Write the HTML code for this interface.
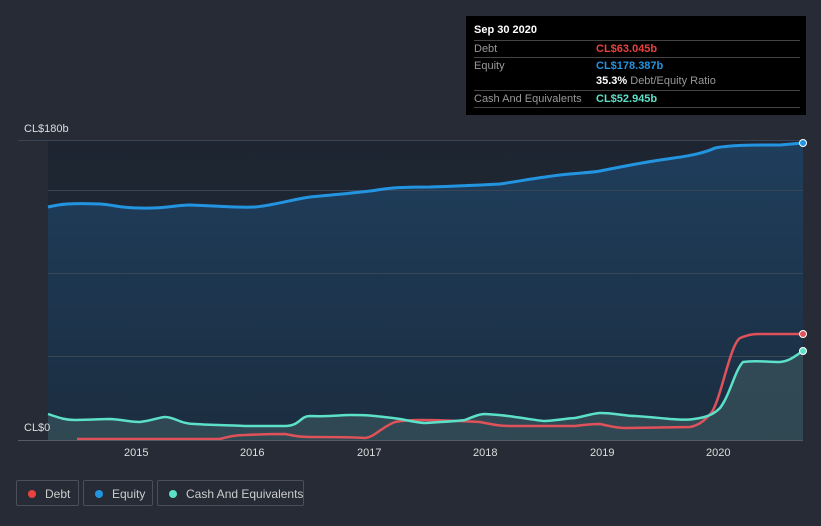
<!DOCTYPE html>
<html><head><style>
body{margin:0;width:821px;height:526px;background:#262b36;font-family:"Liberation Sans",sans-serif;overflow:hidden;position:relative}
.tt{position:absolute;left:466px;top:16px;width:340px;height:99px;background:#000;font-size:11px}
.tt .h{position:absolute;left:8px;top:8px;color:#fff;font-weight:bold}
.row{position:absolute;left:8px;width:326px;border-top:1px solid #444;height:16px;line-height:16px;color:#999}
.row span{position:absolute;left:122px;font-weight:bold}
.leg{position:absolute;top:480px;height:26px;border:1px solid #4a4f5a;border-radius:2px;color:#ccc;font-size:12px;line-height:26px;box-sizing:border-box;white-space:nowrap}
.leg i{position:absolute;left:11px;top:9px;width:8px;height:8px;border-radius:50%}
.ax{position:absolute;color:#ddd;font-size:11px}
</style></head><body>
<svg width="821" height="526" style="position:absolute;left:0;top:0">
<defs>
<linearGradient id="eq" x1="0" y1="0" x2="0" y2="1"><stop offset="0" stop-color="#1f3e5c"/><stop offset="1" stop-color="#1b2d40"/></linearGradient>
<linearGradient id="bg" x1="0" y1="0" x2="0" y2="1"><stop offset="0" stop-color="#1e2531"/><stop offset="1" stop-color="#1d2c3c"/></linearGradient>
</defs>
<rect x="48" y="140" width="755" height="300" fill="url(#bg)"/>
<path d="M48,207 C60,204 70,203 100,204 C115,205 120,208 140,208 C165,209 175,205 190,205 C220,206 240,208 255,207 C270,206 290,200 310,197 C330,195 345,194 370,191 C385,189 390,187 430,187 C460,186 480,185 500,184 C520,181 530,179 545,177 C570,173 590,173 600,171 C620,167 640,163 660,160 C680,157 700,155 715,148 C730,145 750,145 780,145 L803,143 L803,440 L48,440Z" fill="url(#eq)"/>
<g stroke="#3a4556" stroke-width="1"><line x1="18" y1="140.5" x2="803" y2="140.5"/><line x1="48" y1="190.5" x2="803" y2="190.5"/><line x1="48" y1="273.5" x2="803" y2="273.5"/><line x1="48" y1="356.5" x2="803" y2="356.5"/></g>
<path d="M48,414 C60,418 65,420 75,420 C90,420 100,419 110,419 C125,420 130,422 140,422 C155,420 160,417 165,417 C175,417 180,424 195,424 C210,425 220,425 245,426 L285,426 C300,426 300,416 310,416 C330,417 340,415 350,415 C365,415 370,415 400,419 C410,421 420,423 425,423 C440,422 460,421 465,420 C475,416 480,414 485,414 C500,415 510,416 515,417 C530,419 540,421 545,421 C560,420 570,418 575,418 C590,415 595,413 600,413 C615,413 625,416 635,416 C650,417 660,418 670,419 C685,420 690,420 700,418 C710,416 715,413 720,408 C730,395 735,370 743,362 C755,360 765,362 780,362 C790,361 795,356 803,351 L803,440 L48,440Z" fill="#3e5a5f" fill-opacity="0.6"/>
<path d="M48,207 C60,204 70,203 100,204 C115,205 120,208 140,208 C165,209 175,205 190,205 C220,206 240,208 255,207 C270,206 290,200 310,197 C330,195 345,194 370,191 C385,189 390,187 430,187 C460,186 480,185 500,184 C520,181 530,179 545,177 C570,173 590,173 600,171 C620,167 640,163 660,160 C680,157 700,155 715,148 C730,145 750,145 780,145 L803,143" fill="none" stroke="#2394e0" stroke-width="3"/>
<path d="M77,439 L220,439 C230,436 240,435 245,435 C265,434 275,434 285,434 C295,436 300,437 310,437 C330,437 350,437 365,438 C375,437 380,428 395,422 C405,420 415,420 420,420 C440,420 460,421 480,422 C495,425 500,426 510,426 L575,426 C590,424 595,424 600,424 C610,426 615,428 625,428 L690,427 C700,425 705,420 712,412 C722,395 730,345 740,338 C750,334 755,334 760,334 L803,334" fill="none" stroke="#e0525a" stroke-width="2.5"/>
<path d="M48,414 C60,418 65,420 75,420 C90,420 100,419 110,419 C125,420 130,422 140,422 C155,420 160,417 165,417 C175,417 180,424 195,424 C210,425 220,425 245,426 L285,426 C300,426 300,416 310,416 C330,417 340,415 350,415 C365,415 370,415 400,419 C410,421 420,423 425,423 C440,422 460,421 465,420 C475,416 480,414 485,414 C500,415 510,416 515,417 C530,419 540,421 545,421 C560,420 570,418 575,418 C590,415 595,413 600,413 C615,413 625,416 635,416 C650,417 660,418 670,419 C685,420 690,420 700,418 C710,416 715,413 720,408 C730,395 735,370 743,362 C755,360 765,362 780,362 C790,361 795,356 803,351" fill="none" stroke="#5ce0c8" stroke-width="2.5"/>
<line x1="18" y1="440.5" x2="803" y2="440.5" stroke="#555b66"/>
<circle cx="803" cy="143" r="3.5" fill="#2394e0" stroke="#fff" stroke-width="1"/>
<circle cx="803" cy="334" r="3.5" fill="#e0525a" stroke="#fff" stroke-width="1"/>
<circle cx="803" cy="351" r="3.5" fill="#5ce0c8" stroke="#fff" stroke-width="1"/>
</svg>
<div class="ax" style="left:24px;top:123px">CL$180b</div>
<div class="ax" style="left:24px;top:422px">CL$0</div>
<div class="ax" style="left:124px;top:447px">2015</div>
<div class="ax" style="left:240px;top:447px">2016</div>
<div class="ax" style="left:357px;top:447px">2017</div>
<div class="ax" style="left:473px;top:447px">2018</div>
<div class="ax" style="left:590px;top:447px">2019</div>
<div class="ax" style="left:706px;top:447px">2020</div>
<div class="tt"><div class="h">Sep 30 2020</div>
<div class="row" style="top:24px">Debt<span style="color:#e8423f">CL$63.045b</span></div>
<div class="row" style="top:41px">Equity<span style="color:#2394e0">CL$178.387b</span></div>
<div class="row" style="top:57px;border-top:none"><span style="color:#fff">35.3% <b style="color:#999;font-weight:normal">Debt/Equity Ratio</b></span></div>
<div class="row" style="top:74px">Cash And Equivalents<span style="color:#5ce0c8">CL$52.945b</span></div>
<div class="row" style="top:91px;height:0"></div>
</div>
<div class="leg" style="left:16px;width:63px"><i style="background:#e8423f"></i><span style="position:absolute;left:28px">Debt</span></div>
<div class="leg" style="left:83px;width:70px"><i style="background:#2394e0"></i><span style="position:absolute;left:28px">Equity</span></div>
<div class="leg" style="left:157px;width:147px"><i style="background:#5ce0c8"></i><span style="position:absolute;left:28px">Cash And Equivalents</span></div>
</body></html>
